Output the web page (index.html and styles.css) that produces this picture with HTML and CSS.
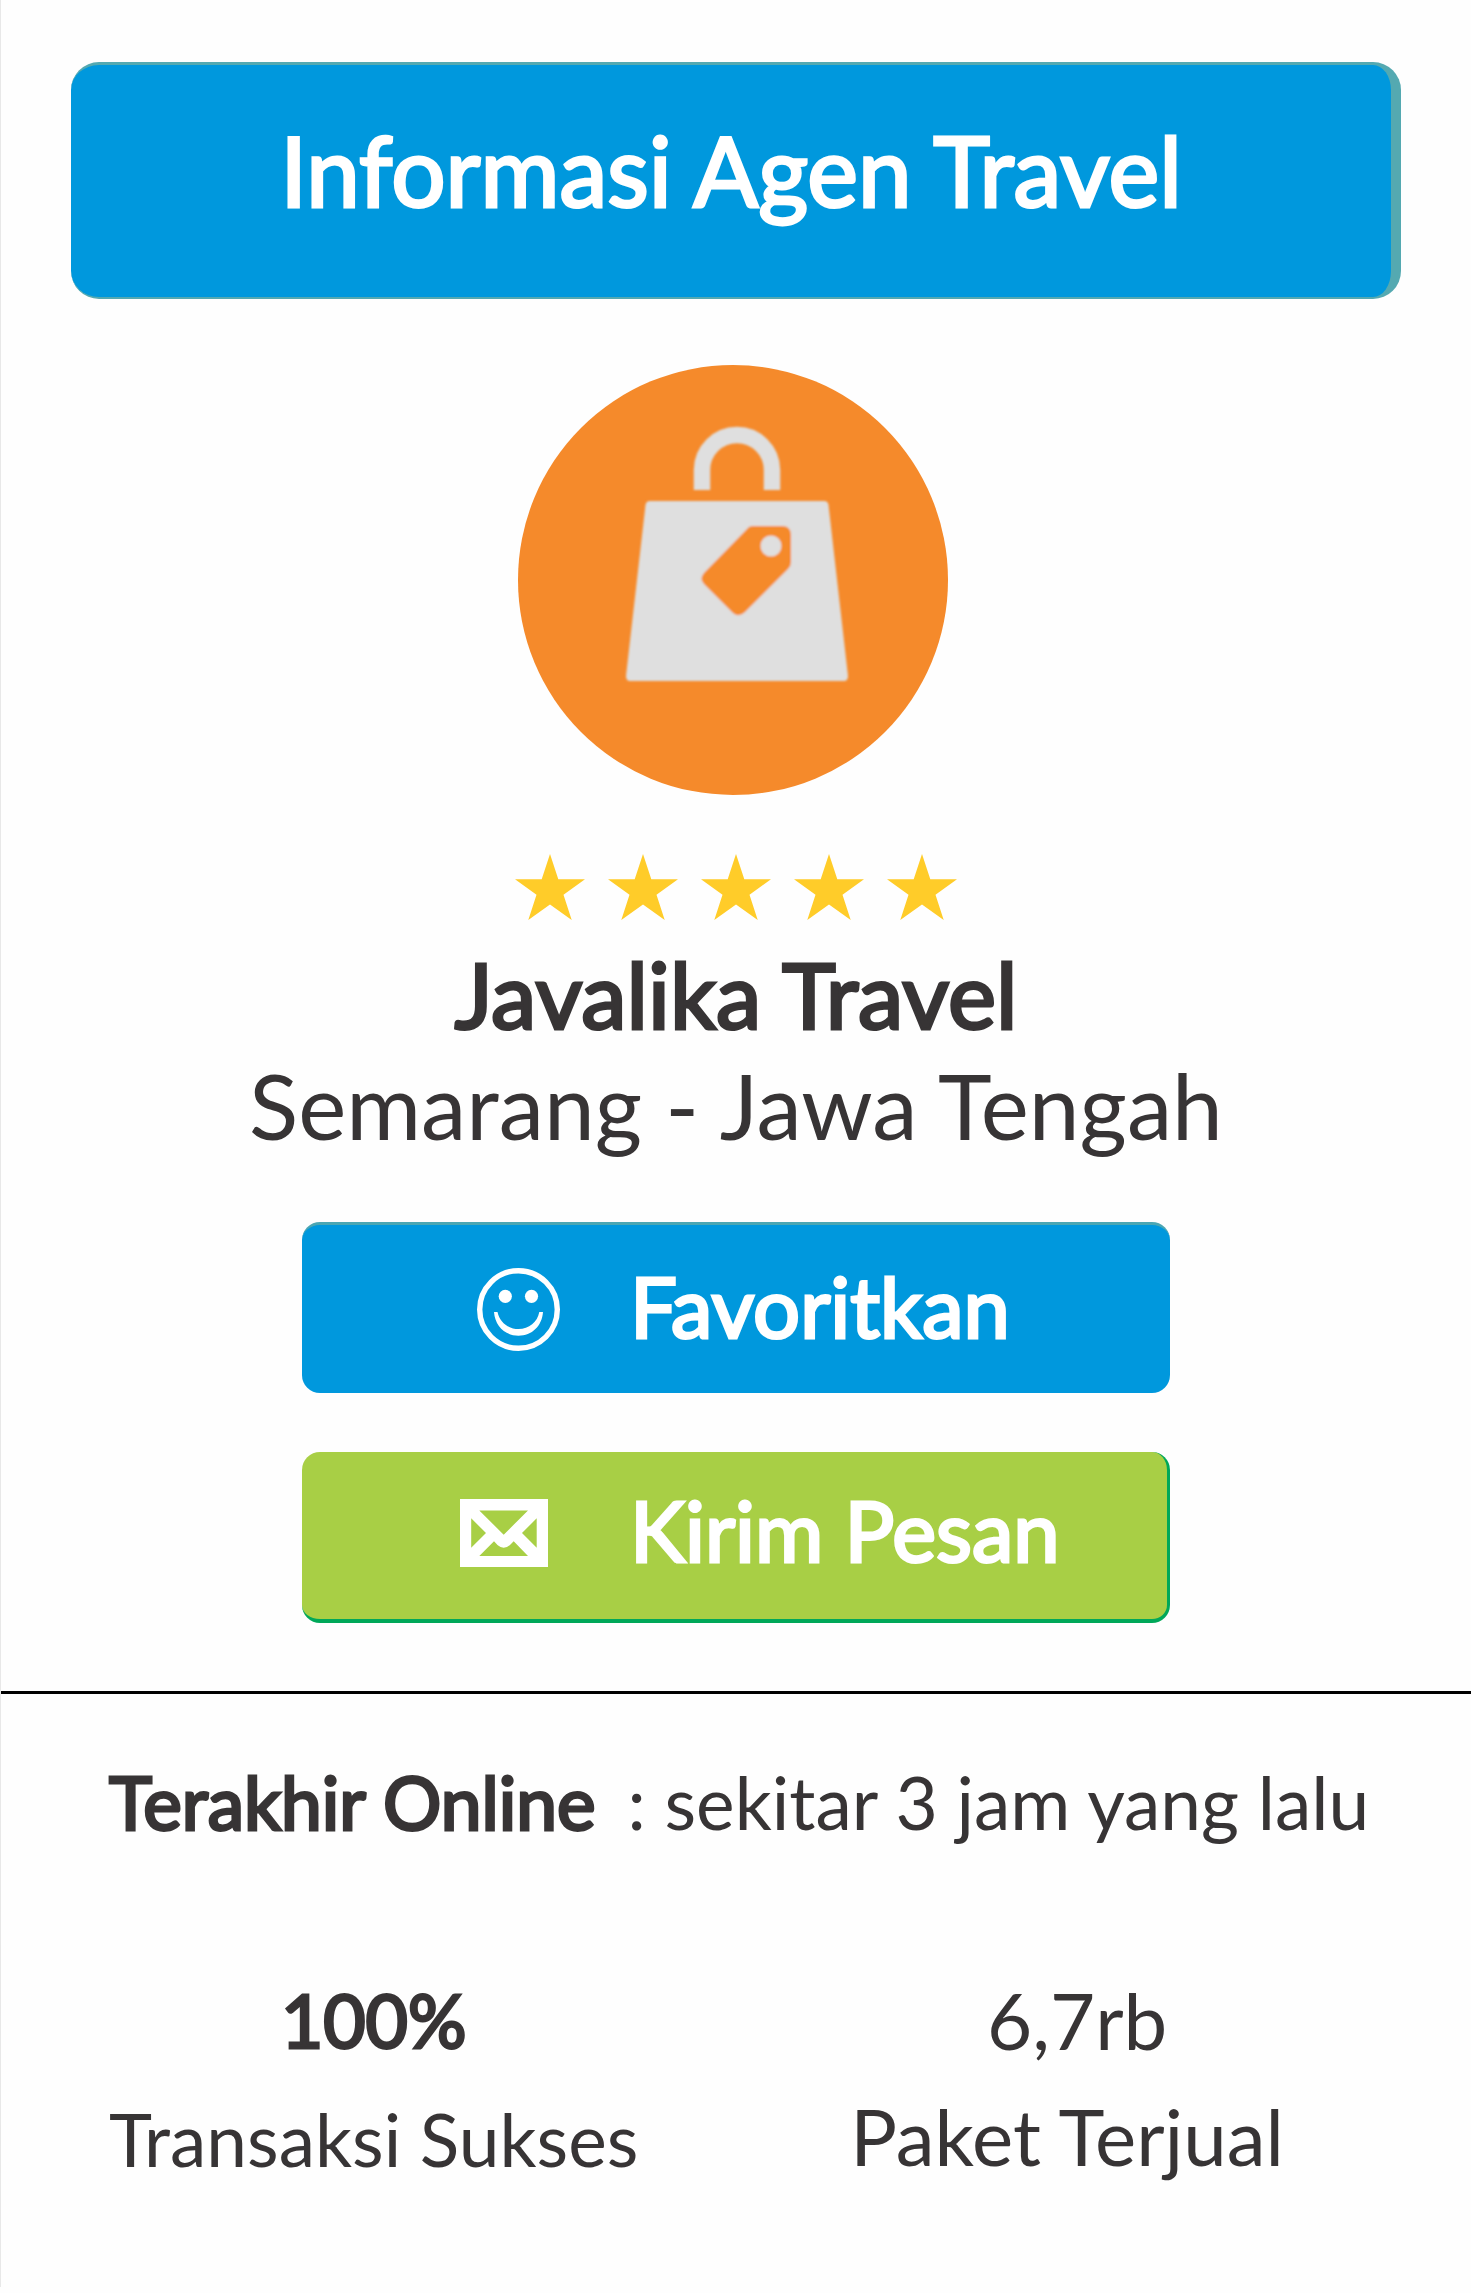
FILE: index.html
```html
<!DOCTYPE html>
<html lang="id">
<head>
<meta charset="utf-8">
<meta name="viewport" content="width=device-width, initial-scale=1">
<title>Informasi Agen Travel</title>
<link rel="stylesheet" href="styles.css">
</head>
<body>
<main class="page">
  <section class="profile">
    <h1 class="banner">Informasi Agen Travel</h1>
    <svg class="avatar" viewBox="0 0 436 430" role="img" aria-label="Logo agen">
      <defs>
        <filter id="soft"><feGaussianBlur stdDeviation="1"/></filter>
      </defs>
      <circle cx="215" cy="215" r="215" fill="#f58a2b"/>
      <g filter="url(#soft)">
        <path d="M184 125V105a35 35 0 0 1 70 0V125" fill="none" stroke="#dfdfdf" stroke-width="16.500"/>
        <path d="M132 136H306Q310 136 310.500 140L330 311Q330 316 326 316H112Q108 316 108 311L127.500 140Q128 136 132 136Z" fill="#dfdfdf"/>
        <path d="M235 161H264Q273 161 273 170V197Q273 201 270 204L227 247Q221 253 215 248L186 219Q181 214 186 208L229 164Q231 161 235 161Z" fill="#f58a2b"/>
        <circle cx="253" cy="181" r="10.500" fill="#dfdfdf"/>
      </g>
    </svg>
    <div class="stars" role="img" aria-label="5 dari 5 bintang">
      <svg class="star" viewBox="0 0 70 66"><path d="M35 0 43.300 25.200H70L48.500 40.800 56.700 66 35 50.500 13.300 66 21.500 40.800 0 25.200H26.700Z"/></svg>
      <svg class="star" viewBox="0 0 70 66"><path d="M35 0 43.300 25.200H70L48.500 40.800 56.700 66 35 50.500 13.300 66 21.500 40.800 0 25.200H26.700Z"/></svg>
      <svg class="star" viewBox="0 0 70 66"><path d="M35 0 43.300 25.200H70L48.500 40.800 56.700 66 35 50.500 13.300 66 21.500 40.800 0 25.200H26.700Z"/></svg>
      <svg class="star" viewBox="0 0 70 66"><path d="M35 0 43.300 25.200H70L48.500 40.800 56.700 66 35 50.500 13.300 66 21.500 40.800 0 25.200H26.700Z"/></svg>
      <svg class="star" viewBox="0 0 70 66"><path d="M35 0 43.300 25.200H70L48.500 40.800 56.700 66 35 50.500 13.300 66 21.500 40.800 0 25.200H26.700Z"/></svg>
    </div>
    <h2 class="name">Javalika Travel</h2>
    <p class="place">Semarang - Jawa Tengah</p>
    <div class="actions">
      <button class="action favorite" type="button">
        <span class="icon"><svg class="smiley" viewBox="0 0 83 83" aria-hidden="true">
          <circle cx="41.500" cy="41.500" r="38.800" fill="none" stroke="#fff" stroke-width="5.400"/>
          <circle cx="28.300" cy="28.300" r="6.600" fill="#fff"/><circle cx="54.500" cy="28.300" r="6.600" fill="#fff"/>
          <path d="M17 44H20.500C22.500 54 31 61 41.500 61S60.500 54 62.300 44H66C65 58 55 67.700 41.500 67.700S18 58 17 44Z" fill="#fff"/>
        </svg></span>
        <span class="label">Favoritkan</span>
      </button>
      <button class="action message" type="button">
        <span class="icon"><svg class="envelope" viewBox="0 0 88 68" aria-hidden="true">
          <path fill="#fff" fill-rule="evenodd" d="M0 0H88V68H0ZM19.300 11.500 43.700 35.700 68 11.500ZM11.200 19.300V48.700L26 34ZM76.700 19.300 62 34 76.700 48.700ZM19.300 57H68L53.700 42.300 50 46Q43.700 51.500 37.500 46L34 42.300Z"/>
        </svg></span>
        <span class="label">Kirim Pesan</span>
      </button>
    </div>
  </section>
  <section class="details">
    <p class="online"><strong class="strong">Terakhir Online</strong><span>: sekitar 3 jam yang lalu</span></p>
    <dl class="stats">
      <div class="stat"><dt>Transaksi Sukses</dt><dd class="strong">100%</dd></div>
      <div class="stat sold"><dt>Paket Terjual</dt><dd>6,7rb</dd></div>
    </dl>
  </section>
</main>
</body>
</html>
```
FILE: styles.css
```css
* {
  box-sizing: border-box;
  margin: 0;
}

body {
  background: #fefefe;
  color: #373435;
  font-family: Lato, "Liberation Sans", sans-serif;
  font-size: 73px;
  line-height: 96px;
}

.page {
  border-left: 1px solid #e8e8e8;
}

.profile {
  display: flex;
  flex-direction: column;
  align-items: center;
  padding: 62px 70px 68px;
  border-bottom: 3px solid #000;
}

.banner {
  align-self: stretch;
  padding: 47px 0 69px;
  border: solid #54a9b1;
  border-width: 3px 10px 2px 0;
  border-radius: 28px;
  background: #0098dd;
  color: #fff;
  font-size: 96px;
  font-weight: 400;
  line-height: 116px;
  text-align: center;
  -webkit-text-stroke: 3px currentColor;
}

.avatar {
  width: 436px;
  height: 430px;
  margin-top: 66px;
}

.stars {
  display: flex;
  gap: 23px;
  margin-top: 59px;
}

.star {
  width: 70px;
  height: 66px;
  fill: #ffcc29;
}

.name {
  margin-top: 18px;
  font-size: 91px;
  font-weight: 400;
  line-height: 111px;
  text-align: center;
  -webkit-text-stroke: 3px currentColor;
}

.place {
  font-size: 91px;
  line-height: 111px;
  text-align: center;
}

.actions {
  display: flex;
  flex-direction: column;
  gap: 59px;
  width: 868px;
  max-width: 100%;
  margin-top: 62px;
}

.action {
  display: grid;
  grid-template-columns: 328px 1fr;
  align-items: center;
  height: 171px;
  padding: 0;
  border: 0 solid;
  border-radius: 18px;
  color: #fff;
  font: inherit;
  font-size: 83px;
  line-height: 104px;
  text-align: left;
  -webkit-text-stroke: 3px currentColor;
}

.favorite {
  border-top: 3px solid #4ba6b3;
  background: #0098dd;
}

.message {
  padding-bottom: 6px;
  border-color: #00a859;
  border-width: 0 3px 4px 0;
  background: #a8cf45;
}

.icon {
  display: flex;
  justify-content: flex-end;
  padding-right: 70px;
}

.message .icon {
  padding-right: 82px;
}

.label {
  padding-bottom: 6px;
}

.smiley {
  width: 83px;
  height: 83px;
}

.envelope {
  width: 88px;
  height: 68px;
}

.details {
  padding: 60px 60px 100px 108px;
}

.online {
  display: flex;
  flex-wrap: wrap;
  column-gap: 32px;
}

.strong {
  font-weight: 400;
  -webkit-text-stroke: 3px currentColor;
}

.stats {
  display: flex;
  flex-wrap: wrap;
  justify-content: space-between;
  margin-top: 122px;
  padding-right: 127px;
}

.stat {
  display: flex;
  flex-direction: column-reverse;
  gap: 23px;
  text-align: center;
}

.sold {
  gap: 20px;
  justify-content: flex-end;
  font-size: 78px;
}

.sold dd {
  padding-left: 20px;
}
```
